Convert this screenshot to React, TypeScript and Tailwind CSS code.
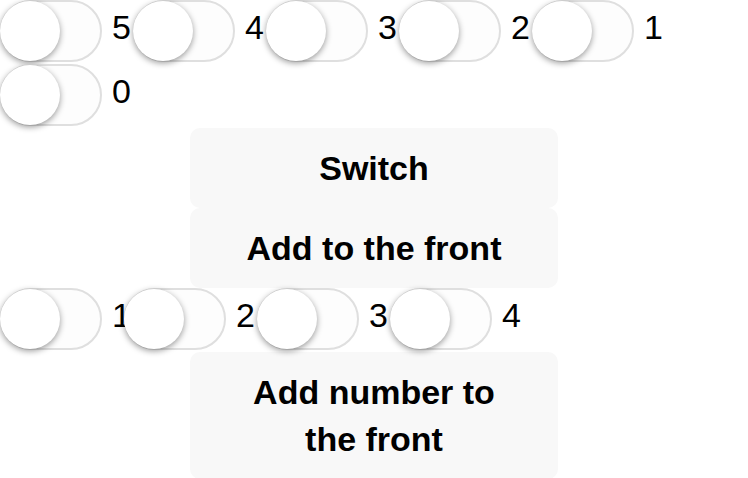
import React from 'react';

const topNumbers = [5, 4, 3, 2, 1, 0];
const bottomNumbers = [1, 2, 3, 4];

function Toggle() {
  return (
    <div className="relative w-[102px] h-[62px] shrink-0 rounded-full border-2 border-[#dfdfdf] bg-[#fdfdfd]">
      <div className="absolute left-[-2px] top-[-1px] w-[60px] h-[60px] rounded-full bg-white shadow-[0_2px_6px_rgba(0,0,0,0.4)]" />
    </div>
  );
}

function SwitchItem({ n }: { n: number }) {
  return (
    <div className="flex items-start h-[64px]">
      <Toggle />
      <span
        className={`ml-[10px] mr-[2px] text-[34px] leading-[54px] text-black whitespace-nowrap ${
          n === 1 ? 'w-[10px]' : 'w-[19px]'
        }`}
      >
        {n}
      </span>
    </div>
  );
}

function WideButton({ children }: { children: React.ReactNode }) {
  return (
    <button className="block mx-auto w-[368px] px-[40px] py-[16.5px] rounded-[10px] bg-[#f8f8f8] text-[34px] leading-[47px] font-bold text-black text-center">
      {children}
    </button>
  );
}

export default function App() {
  return (
    <div className="w-[748px] h-[478px] overflow-hidden bg-white" style={{ fontFamily: '"Liberation Sans", Arial, sans-serif' }}>
      {/* Numbered switches */}
      <div className="flex flex-wrap">
        {topNumbers.map((n) => (
          <SwitchItem key={n} n={n} />
        ))}
      </div>

      <WideButton>Switch</WideButton>
      <WideButton>Add to the front</WideButton>

      <div className="flex flex-wrap">
        {bottomNumbers.map((n) => (
          <SwitchItem key={n} n={n} />
        ))}
      </div>

      <WideButton>Add number to the front</WideButton>
    </div>
  );
}
